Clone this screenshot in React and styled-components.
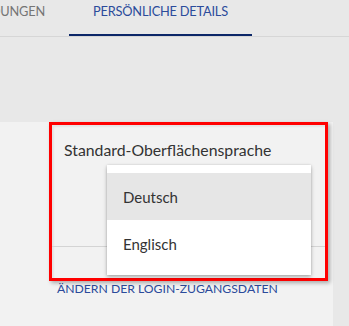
import React from "react";
import styled, { createGlobalStyle } from "styled-components";

const Global = createGlobalStyle`
  html, body { margin: 0; padding: 0; }
  body {
    background: #e8e8e8;
    font-family: Lato, "Noto Sans", sans-serif;
    width: 349px;
    height: 326px;
    overflow: hidden;
  }
`;

const Page = styled.div`
  display: flex;
  flex-direction: column;
  height: 326px;
`;

const TabBar = styled.div`
  display: flex;
  height: 36px;
  border-bottom: 1px solid #d6d6d6;
  overflow: hidden;
`;

const Tab = styled.div`
  flex: none;
  display: flex;
  align-items: flex-start;
  justify-content: ${(p) => (p.$clipped ? "flex-end" : "center")};
  box-sizing: border-box;
  height: 36px;
  padding: 3px 24px 0;
  font-size: 12.8px;
  line-height: 17px;
  letter-spacing: -0.2px;
  white-space: nowrap;
  overflow: hidden;
  text-transform: uppercase;
  color: ${(p) => (p.$active ? "#2b4b9b" : "#757575")};
  border-bottom: 2px solid ${(p) => (p.$active ? "#0c2768" : "transparent")};
  width: ${(p) => p.$width};
`;

const Panel = styled.div`
  margin-top: 85px;
  width: 333px;
  flex: 1;
  background: #f2f2f2;
  display: flex;
  flex-direction: column;
`;

const Highlight = styled.div`
  position: relative;
  margin-left: 49px;
  width: 279px;
  box-sizing: border-box;
  border: 3px solid #ff0000;
  box-shadow: 2px 2px 4px rgba(0, 0, 0, 0.3), inset 2px 2px 2px rgba(0, 0, 0, 0.06);
  display: flex;
  flex-direction: column;
  height: 159px;
`;

const Label = styled.div`
  padding: 15px 0 0 12px;
  font-size: 15.8px;
  line-height: 20px;
  color: #333333;
`;

const Field = styled.div`
  height: 86px;
  border-bottom: 1px solid #d4d4d4;
`;

const Menu = styled.ul`
  position: absolute;
  left: 55px;
  top: 40px;
  width: 204px;
  margin: 0;
  padding: 8px 0;
  list-style: none;
  background: #ffffff;
  box-shadow: 0 2px 4px rgba(0, 0, 0, 0.28), 0 0 2px rgba(0, 0, 0, 0.12);
`;

const Option = styled.li`
  height: 47px;
  display: flex;
  align-items: center;
  padding-left: 16px;
  font-size: 15px;
  color: #333333;
  background: ${(p) => (p.$selected ? "#e6e6e6" : "transparent")};
`;

const Link = styled.a`
  margin: 0 0 0 57px;
  font-size: 12.2px;
  line-height: 16px;
  color: #2b4b9b;
  text-transform: uppercase;
  text-decoration: none;
`;

export default function App() {
  return (
    <Page>
      <Global />
      <TabBar>
        <Tab $clipped $width="69px">Anwendungen</Tab>
        <Tab $active $width="183px">Persönliche Details</Tab>
      </TabBar>
      <Panel>
        <Highlight>
          <Label>Standard-Oberflächensprache</Label>
          <Field />
          <Menu>
            <Option $selected>Deutsch</Option>
            <Option>Englisch</Option>
          </Menu>
        </Highlight>
        <Link href="#">Ändern der Login-Zugangsdaten</Link>
      </Panel>
    </Page>
  );
}
